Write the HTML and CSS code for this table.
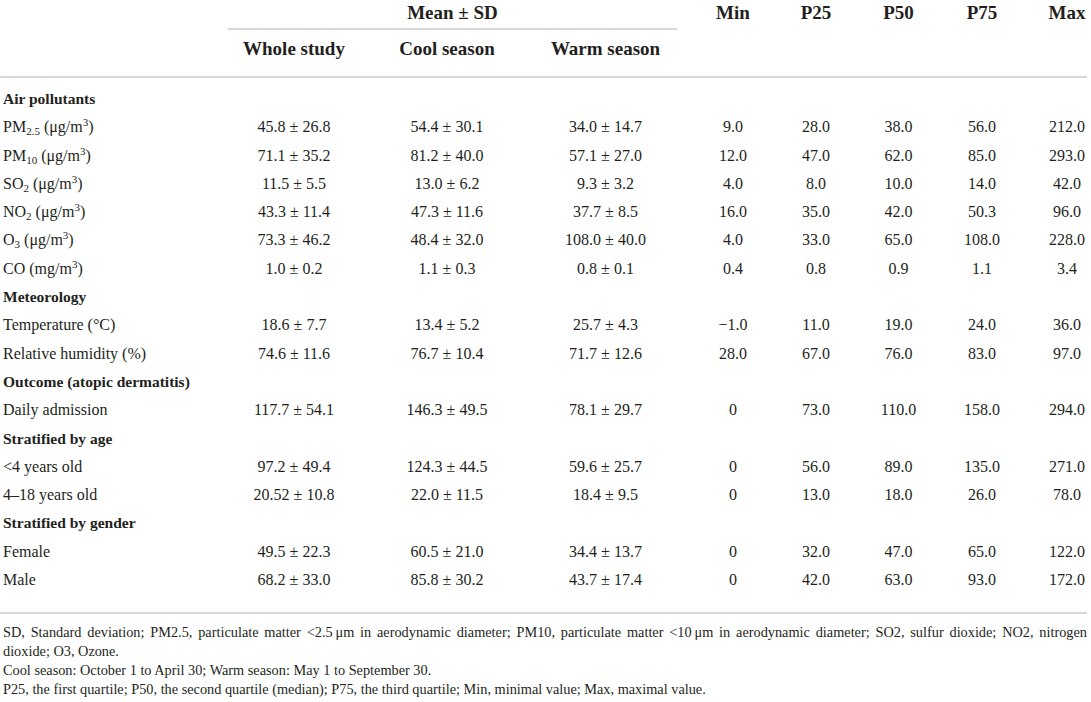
FILE: index.html
```html
<!DOCTYPE html>
<html lang="en">
<head>
    <meta charset="UTF-8">
    <meta name="viewport" content="width=device-width, initial-scale=1.0">
    <title>Air pollutants and atopic dermatitis - descriptive statistics</title>
    <link rel="stylesheet" href="styles.css">
</head>
<body>
    <div class="table-wrap">
        <table class="stats">
            <colgroup>
                <col class="c-label">
                <col class="c-whole">
                <col class="c-cool">
                <col class="c-warm">
                <col class="c-min">
                <col class="c-p25">
                <col class="c-p50">
                <col class="c-p75">
                <col class="c-max">
            </colgroup>
            <thead>
                <tr class="head-top">
                    <th rowspan="2" class="head-cell"></th>
                    <th colspan="3" class="group-head">Mean ± SD</th>
                    <th rowspan="2" class="head-cell col-min">Min</th>
                    <th rowspan="2" class="head-cell">P25</th>
                    <th rowspan="2" class="head-cell">P50</th>
                    <th rowspan="2" class="head-cell">P75</th>
                    <th rowspan="2" class="head-cell col-max">Max</th>
                </tr>
                <tr class="head-sub">
                    <th>Whole study</th>
                    <th>Cool season</th>
                    <th>Warm season</th>
                </tr>
            </thead>
            <tbody>
                <tr class="section first">
                    <td colspan="9">Air pollutants</td>
                </tr>
                <tr>
                    <td>PM<sub>2.5</sub> (μg/m<sup>3</sup>)</td>
                    <td>45.8 ± 26.8</td>
                    <td>54.4 ± 30.1</td>
                    <td>34.0 ± 14.7</td>
                    <td class="col-min">9.0</td>
                    <td>28.0</td>
                    <td>38.0</td>
                    <td>56.0</td>
                    <td class="col-max">212.0</td>
                </tr>
                <tr>
                    <td>PM<sub>10</sub> (μg/m<sup>3</sup>)</td>
                    <td>71.1 ± 35.2</td>
                    <td>81.2 ± 40.0</td>
                    <td>57.1 ± 27.0</td>
                    <td class="col-min">12.0</td>
                    <td>47.0</td>
                    <td>62.0</td>
                    <td>85.0</td>
                    <td class="col-max">293.0</td>
                </tr>
                <tr>
                    <td>SO<sub>2</sub> (μg/m<sup>3</sup>)</td>
                    <td>11.5 ± 5.5</td>
                    <td>13.0 ± 6.2</td>
                    <td>9.3 ± 3.2</td>
                    <td class="col-min">4.0</td>
                    <td>8.0</td>
                    <td>10.0</td>
                    <td>14.0</td>
                    <td class="col-max">42.0</td>
                </tr>
                <tr>
                    <td>NO<sub>2</sub> (μg/m<sup>3</sup>)</td>
                    <td>43.3 ± 11.4</td>
                    <td>47.3 ± 11.6</td>
                    <td>37.7 ± 8.5</td>
                    <td class="col-min">16.0</td>
                    <td>35.0</td>
                    <td>42.0</td>
                    <td>50.3</td>
                    <td class="col-max">96.0</td>
                </tr>
                <tr>
                    <td>O<sub>3</sub> (μg/m<sup>3</sup>)</td>
                    <td>73.3 ± 46.2</td>
                    <td>48.4 ± 32.0</td>
                    <td>108.0 ± 40.0</td>
                    <td class="col-min">4.0</td>
                    <td>33.0</td>
                    <td>65.0</td>
                    <td>108.0</td>
                    <td class="col-max">228.0</td>
                </tr>
                <tr>
                    <td>CO (mg/m<sup>3</sup>)</td>
                    <td>1.0 ± 0.2</td>
                    <td>1.1 ± 0.3</td>
                    <td>0.8 ± 0.1</td>
                    <td class="col-min">0.4</td>
                    <td>0.8</td>
                    <td>0.9</td>
                    <td>1.1</td>
                    <td class="col-max">3.4</td>
                </tr>
                <tr class="section">
                    <td colspan="9">Meteorology</td>
                </tr>
                <tr>
                    <td>Temperature (°C)</td>
                    <td>18.6 ± 7.7</td>
                    <td>13.4 ± 5.2</td>
                    <td>25.7 ± 4.3</td>
                    <td class="col-min">−1.0</td>
                    <td>11.0</td>
                    <td>19.0</td>
                    <td>24.0</td>
                    <td class="col-max">36.0</td>
                </tr>
                <tr>
                    <td>Relative humidity (%)</td>
                    <td>74.6 ± 11.6</td>
                    <td>76.7 ± 10.4</td>
                    <td>71.7 ± 12.6</td>
                    <td class="col-min">28.0</td>
                    <td>67.0</td>
                    <td>76.0</td>
                    <td>83.0</td>
                    <td class="col-max">97.0</td>
                </tr>
                <tr class="section">
                    <td colspan="9">Outcome (atopic dermatitis)</td>
                </tr>
                <tr>
                    <td>Daily admission</td>
                    <td>117.7 ± 54.1</td>
                    <td>146.3 ± 49.5</td>
                    <td>78.1 ± 29.7</td>
                    <td class="col-min">0</td>
                    <td>73.0</td>
                    <td>110.0</td>
                    <td>158.0</td>
                    <td class="col-max">294.0</td>
                </tr>
                <tr class="section">
                    <td colspan="9">Stratified by age</td>
                </tr>
                <tr>
                    <td>&lt;4 years old</td>
                    <td>97.2 ± 49.4</td>
                    <td>124.3 ± 44.5</td>
                    <td>59.6 ± 25.7</td>
                    <td class="col-min">0</td>
                    <td>56.0</td>
                    <td>89.0</td>
                    <td>135.0</td>
                    <td class="col-max">271.0</td>
                </tr>
                <tr>
                    <td>4–18 years old</td>
                    <td>20.52 ± 10.8</td>
                    <td>22.0 ± 11.5</td>
                    <td>18.4 ± 9.5</td>
                    <td class="col-min">0</td>
                    <td>13.0</td>
                    <td>18.0</td>
                    <td>26.0</td>
                    <td class="col-max">78.0</td>
                </tr>
                <tr class="section">
                    <td colspan="9">Stratified by gender</td>
                </tr>
                <tr>
                    <td>Female</td>
                    <td>49.5 ± 22.3</td>
                    <td>60.5 ± 21.0</td>
                    <td>34.4 ± 13.7</td>
                    <td class="col-min">0</td>
                    <td>32.0</td>
                    <td>47.0</td>
                    <td>65.0</td>
                    <td class="col-max">122.0</td>
                </tr>
                <tr class="last">
                    <td>Male</td>
                    <td>68.2 ± 33.0</td>
                    <td>85.8 ± 30.2</td>
                    <td>43.7 ± 17.4</td>
                    <td class="col-min">0</td>
                    <td>42.0</td>
                    <td>63.0</td>
                    <td>93.0</td>
                    <td class="col-max">172.0</td>
                </tr>
            </tbody>
        </table>

        <div class="notes">
            <p class="note-long">SD, Standard deviation; PM2.5, particulate matter &lt;2.5&#8201;μm in aerodynamic diameter; PM10, particulate matter &lt;10&#8201;μm in aerodynamic diameter; SO2, sulfur dioxide; NO2, nitrogen dioxide; O3, Ozone.</p>
            <p>Cool season: October 1 to April 30; Warm season: May 1 to September 30.</p>
            <p>P25, the first quartile; P50, the second quartile (median); P75, the third quartile; Min, minimal value; Max, maximal value.</p>
        </div>
    </div>
</body>
</html>
```

FILE: styles.css
```css
* {
    margin: 0;
    padding: 0;
    box-sizing: border-box;
}

body {
    background: #ffffff;
    color: #231f20;
    font-family: 'Liberation Serif', 'Times New Roman', serif;
}

.table-wrap {
    width: 1087px;
}

.stats {
    width: 1087px;
    table-layout: fixed;
    border-collapse: separate;
    border-spacing: 0;
    font-size: 16px;
}

.c-label { width: 228px; }
.c-whole { width: 132px; }
.c-cool { width: 174px; }
.c-warm { width: 143px; }
.c-min { width: 98px; }
.c-p25 { width: 82px; }
.c-p50 { width: 83px; }
.c-p75 { width: 84px; }
.c-max { width: 63px; }

/* header */
.stats th {
    font-size: 19px;
    font-weight: bold;
    line-height: 22px;
    text-align: center;
    vertical-align: top;
    padding: 2px 0 0;
}

.head-cell {
    border-bottom: 2px solid #d6d6d6;
}

.stats .group-head {
    padding-bottom: 4px;
    border-bottom: 2px solid #d6d6d6;
}

.stats .head-sub th {
    padding: 8px 0 16px;
    border-bottom: 2px solid #d6d6d6;
}

/* body rows */
.stats td {
    line-height: 28.3px;
    padding: 0;
    text-align: center;
    white-space: nowrap;
}

.stats td:first-child {
    text-align: left;
    padding-left: 3px;
}

.stats .col-min {
    padding-left: 14px;
}

.stats .col-max {
    padding-left: 23px;
}

.section td {
    font-weight: bold;
    font-size: 15.5px;
}

.stats .first td {
    padding-top: 7px;
}

.stats .last td {
    padding-bottom: 18px;
    border-bottom: 2px solid #d6d6d6;
}

sub,
sup {
    font-size: 11px;
    line-height: 0;
}

sub {
    vertical-align: -3px;
}

sup {
    vertical-align: 6px;
}

/* footnotes */
.notes {
    padding: 9px 0 0 3px;
    font-size: 14.3px;
    line-height: 19px;
}

.note-long {
    text-align: justify;
}
```
